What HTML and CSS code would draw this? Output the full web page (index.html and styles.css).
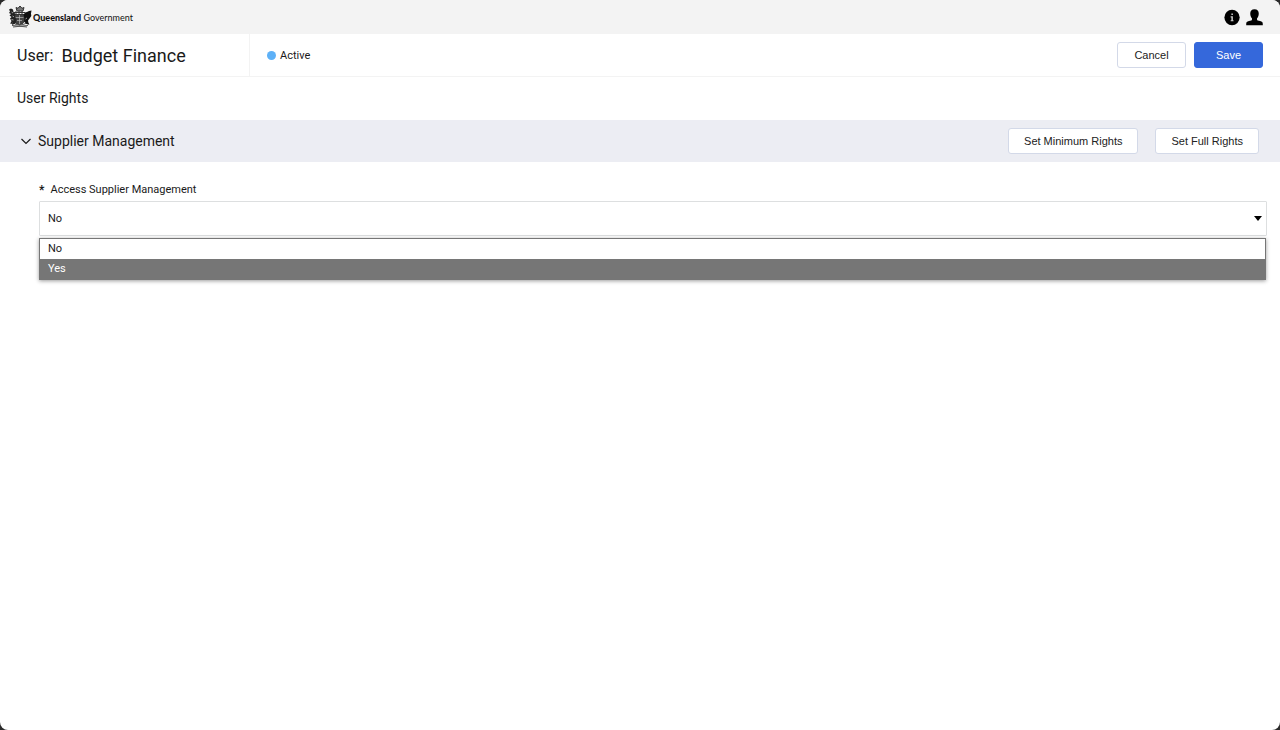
FILE: index.html
```html
<!DOCTYPE html>
<html lang="en">
<head>
<meta charset="utf-8">
<meta name="viewport" content="width=device-width, initial-scale=1">
<title>User Rights</title>
<link rel="stylesheet" href="styles.css">
</head>
<body>
<div class="app">
  <header class="topbar">
    <a class="brand" href="#">
      <svg class="crest" viewBox="0 0 24 24" aria-hidden="true">
        <g fill="none" stroke="#333" stroke-width="1">
          <path d="M9 6 8 2.500l2 .8L12 1l2 2.300 2-.8L15 6z" fill="#777"/>
          <path d="M6.500 9.500h10v6q-1 3.500-5 4.500Q7.500 19 6.500 15.500z" fill="#444"/>
          <path d="M7.500 12.500h8M11.500 10v9M9 15.500h5" stroke="#bbb" stroke-width=".7"/>
          <path d="M6 7.500h11M8 6v3M11 6v3M14 6v3"/>
          <path d="M3 18.500q3-1 5 1l3.500.5 3.500-.5q3-2 6-.5M4 20.500q7.500 1.500 16 0M5 22q7-1.500 14 0" stroke="#555"/>
        </g>
        <path fill="#222" d="M1 4.500 3 3.500l2 1 .5 2.500 2 2-.5 3 1.500 2.500-1 4L4 20l.5-2.500L2 19l1.500-3-1.500-2.500L3.500 12 1.500 10.500 3 9 1 8l1-1.500z"/>
        <path fill="#111" d="M19 7 21 6l2.500-.5-.5 3 .3 2.500-1.800 2.500-1.500 2 .5 2.500 1 1.500-3-.5-2.500-2.500.5-3-1-3.500 1.500-2.500z"/>
        <path fill="none" stroke="#f3f3f3" stroke-width=".6" d="m3.500 7 1.500 1M4.500 11l1.500.8M3.500 14.500l2 .5M17.500 14l1.500-1"/>
      </svg>
      <span class="brand-name"><b>Queensland</b> Government</span>
    </a>
    <nav class="tools" aria-label="Account">
      <button class="icon-button" type="button" aria-label="Information">
        <svg viewBox="0 0 16 16" aria-hidden="true"><circle cx="8.500" cy="8" r="7.200"/><path fill="#ccc" d="M7.900 4.300h1.400v1.400H7.900zM7.200 6.900h2.100v3.700h.6v1H7.200v-1h.7V7.900h-.7z"/></svg>
      </button>
      <button class="icon-button" type="button" aria-label="User profile">
        <svg viewBox="0 0 16 16" aria-hidden="true"><path d="M8 .3c2.800 0 4 1.600 4 4 0 2-.6 3.500-1.600 4.500v1.400c0 .6 1.200.8 2.800 1.200 2 .5 2.600 1.200 2.600 2.700v1.200H.2v-1.200c0-1.500.6-2.200 2.600-2.700 1.600-.4 2.800-.6 2.800-1.200V8.800C4.600 7.800 4 6.300 4 4.300c0-2.400 1.200-4 4-4z"/></svg>
      </button>
    </nav>
  </header>

  <section class="userbar">
    <h1 class="user-title"><span class="user-label">User:</span><span>Budget Finance</span></h1>
    <div class="status"><span class="status-dot"></span>Active</div>
    <div class="actions">
      <button class="button" type="button">Cancel</button>
      <button class="button primary" type="button">Save</button>
    </div>
  </section>

  <main>
    <h2 class="page-title">User Rights</h2>
    <section>
      <div class="section-head">
        <button class="collapse" type="button" aria-expanded="true">
          <svg viewBox="0 0 12 12" aria-hidden="true"><path d="m1.500 4 4.500 4.500 4.500-4.500"/></svg>
          Supplier Management
        </button>
        <div class="section-actions">
          <button class="button" type="button">Set Minimum Rights</button>
          <button class="button" type="button">Set Full Rights</button>
        </div>
      </div>
      <div class="field">
        <label class="field-label" for="access"><span class="required">*</span>Access Supplier Management</label>
        <div class="select-wrap">
          <select class="select" id="access">
            <option>No</option>
            <option>Yes</option>
          </select>
          <svg class="caret" viewBox="0 0 8 5" aria-hidden="true"><path d="M0 0h8L4 5z"/></svg>
          <ul class="menu" role="listbox" aria-label="Access Supplier Management">
            <li class="menu-item" role="option">No</li>
            <li class="menu-item highlighted" role="option" aria-selected="true">Yes</li>
          </ul>
        </div>
      </div>
    </section>
  </main>
</div>
</body>
</html>
```
FILE: styles.css
```css
* { box-sizing: border-box; }

html { background: #2b2b2b; }

body {
  margin: 0;
  font-family: Roboto, "Liberation Sans", sans-serif;
  font-size: 11px;
  color: #1a1a1a;
}

.app {
  min-height: 100vh;
  background: #fff;
  border-radius: 8px;
  overflow: hidden;
}

.topbar {
  display: flex;
  align-items: center;
  justify-content: space-between;
  height: 34px;
  padding: 0 17px 0 8px;
  background: #f3f3f3;
}

.brand {
  display: flex;
  align-items: center;
  gap: 1px;
  color: #111;
  text-decoration: none;
}

.crest { width: 24px; height: 24px; }

.brand-name {
  font-family: Lato, sans-serif;
  font-size: 9px;
}

.brand-name b { font-weight: 900; }

.tools { display: flex; gap: 6px; }

.icon-button {
  width: 17px;
  height: 17px;
  padding: 0;
  border: 0;
  background: none;
}

.icon-button svg { display: block; width: 100%; height: 100%; }

.userbar {
  display: flex;
  align-items: stretch;
  height: 43px;
  border-bottom: 1px solid #f3f3f3;
}

.user-title {
  display: flex;
  align-items: center;
  gap: 8px;
  width: 250px;
  margin: 0;
  padding-left: 17px;
  border-right: 1px solid #f3f3f3;
  font-size: 18px;
  font-weight: 400;
}

.user-label { font-size: 16px; }

.status {
  display: flex;
  align-items: center;
  gap: 4px;
  padding-left: 17px;
}

.status-dot {
  width: 9px;
  height: 9px;
  border-radius: 50%;
  background: #5eb1f7;
}

.actions {
  display: flex;
  align-items: center;
  gap: 8px;
  margin-left: auto;
  padding-right: 17px;
}

.button {
  min-width: 69px;
  height: 26px;
  padding: 0 15px;
  border: 1px solid #d3d9e8;
  border-radius: 3px;
  background: #fff;
  color: #222;
  font-family: "Liberation Sans", Arial, sans-serif;
  font-size: 11px;
}

.primary {
  border-color: #3568db;
  background: #3568db;
  color: #fff;
}

.page-title {
  margin: 0;
  padding-left: 17px;
  font-size: 14px;
  font-weight: 400;
  line-height: 43px;
}

.section-head {
  display: flex;
  align-items: center;
  justify-content: space-between;
  height: 42px;
  padding: 0 21px 0 20px;
  background: #ecedf3;
}

.collapse {
  display: flex;
  align-items: center;
  gap: 6px;
  padding: 0;
  border: 0;
  background: none;
  color: #1a1a1a;
  font-family: inherit;
  font-size: 14px;
}

.collapse svg {
  width: 12px;
  height: 12px;
  fill: none;
  stroke: #1a1a1a;
  stroke-width: 1.2;
}

.section-actions { display: flex; gap: 17px; }

.field { padding: 20px 13px 0 39px; }

.field-label {
  display: flex;
  gap: 6px;
  line-height: 16px;
}

.required { font-size: 12px; font-weight: 700; }

.select-wrap { position: relative; margin-top: 3px; }

.select {
  display: block;
  width: 100%;
  height: 35px;
  padding: 0 8px;
  border: 1px solid #dddfe0;
  border-radius: 1px;
  appearance: none;
  background: #fff;
  color: #1a1a1a;
  font-family: inherit;
  font-size: 11px;
}

.caret {
  position: absolute;
  top: 15px;
  right: 5px;
  width: 8px;
  height: 5px;
  pointer-events: none;
}

.menu {
  position: absolute;
  top: 37px;
  right: 1px;
  left: 0;
  margin: 0;
  padding: 0;
  border: 1px solid #767676;
  background: #fff;
  box-shadow: 0 1px 4px rgba(0, 0, 0, .4);
  list-style: none;
}

.menu-item {
  padding: 0 8px;
  line-height: 20px;
}

.highlighted { background: #767676; color: #fff; }
```
